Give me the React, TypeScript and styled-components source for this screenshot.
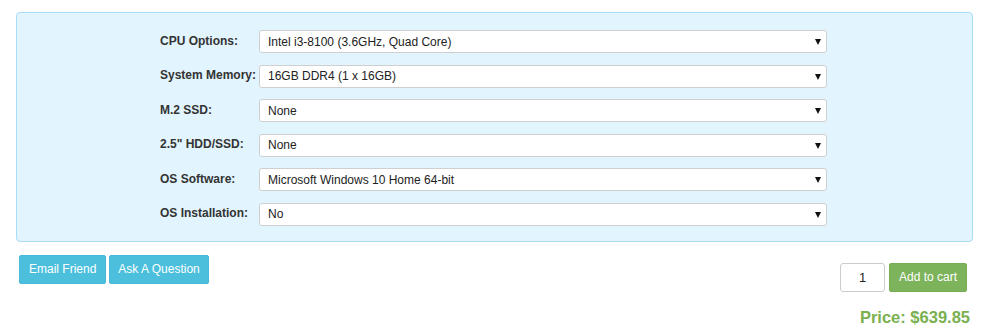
import React from "react";
import styled, { createGlobalStyle } from "styled-components";

const Global = createGlobalStyle`
  html, body { margin: 0; padding: 0; background: #fff; }
  body { font-family: "Liberation Sans", Arial, sans-serif; color: #333; }
  * { box-sizing: border-box; }
`;

const Page = styled.div`
  width: 1000px;
  padding: 12px 27px 0 16px;
`;

const Panel = styled.div`
  background: #e2f4fd;
  border: 1px solid #a9dcf6;
  border-radius: 4px;
  padding: 17px 0 15px;
  display: flex;
  justify-content: center;
`;

const Form = styled.div`
  width: 667px;
  margin-left: -2px;
  display: flex;
  flex-direction: column;
  gap: 11.6px;
`;

const Row = styled.div`
  display: grid;
  grid-template-columns: 99px 1fr;
  align-items: center;
`;

const Label = styled.label`
  font-size: 12px;
  font-weight: bold;
  color: #333;
  padding-bottom: 2px;
`;

const SelectWrap = styled.div`
  position: relative;
  &::after {
    content: "";
    position: absolute;
    right: 6px;
    top: 9px;
    border-left: 3.5px solid transparent;
    border-right: 3.5px solid transparent;
    border-top: 6px solid #111;
    pointer-events: none;
  }
`;

const Select = styled.select`
  appearance: none;
  -webkit-appearance: none;
  width: 100%;
  height: 23px;
  background: #fff;
  border: 1px solid #cfcfcf;
  border-radius: 3px;
  padding: 0 0 0 8px;
  font-family: "Liberation Sans", Arial, sans-serif;
  font-size: 12px;
  color: #222;
  outline: none;
`;

const Bottom = styled.div`
  display: flex;
  justify-content: space-between;
  align-items: flex-start;
  padding: 13px 0 0 3px;
`;

const Buttons = styled.div`
  display: flex;
  gap: 3px;
`;

const InfoButton = styled.button<{ $pad?: number }>`
  height: 29px;
  padding: 0 ${(p) => p.$pad ?? 9}px;
  background: #4bbfdc;
  border: 1px solid #46b8da;
  border-radius: 2px;
  color: #fff;
  font-family: "Liberation Sans", Arial, sans-serif;
  font-size: 12px;
`;

const Right = styled.div`
  display: flex;
  flex-direction: column;
  align-items: flex-end;
  padding-top: 8px;
  margin-right: 3px;
`;

const Cart = styled.div`
  display: flex;
  gap: 4px;
  margin-right: 3px;
`;

const Qty = styled.input`
  width: 45px;
  height: 29px;
  border: 1px solid #ccc;
  border-radius: 3px;
  text-align: center;
  font-family: "Liberation Sans", Arial, sans-serif;
  font-size: 13px;
  color: #222;
  outline: none;
`;

const CartButton = styled.button`
  width: 78px;
  height: 29px;
  background: #7cb35b;
  border: 1px solid #76ad55;
  border-radius: 2px;
  color: #fff;
  font-family: "Liberation Sans", Arial, sans-serif;
  font-size: 12px;
`;

const Price = styled.div`
  margin-top: 16px;
  font-size: 16.5px;
  font-weight: bold;
  color: #7ab050;
`;

const options: [string, string][] = [
  ["CPU Options:", "Intel i3-8100 (3.6GHz, Quad Core)"],
  ["System Memory:", "16GB DDR4 (1 x 16GB)"],
  ["M.2 SSD:", "None"],
  ['2.5" HDD/SSD:', "None"],
  ["OS Software:", "Microsoft Windows 10 Home 64-bit"],
  ["OS Installation:", "No"],
];

export default function App() {
  return (
    <>
      <Global />
      <Page>
        <Panel>
          <Form>
            {options.map(([label, value]) => (
              <Row key={label}>
                <Label>{label}</Label>
                <SelectWrap>
                  <Select defaultValue={value}>
                    <option>{value}</option>
                  </Select>
                </SelectWrap>
              </Row>
            ))}
          </Form>
        </Panel>
        <Bottom>
          <Buttons>
            <InfoButton $pad={9}>Email Friend</InfoButton>
            <InfoButton $pad={8}>Ask A Question</InfoButton>
          </Buttons>
          <Right>
            <Cart>
              <Qty defaultValue="1" />
              <CartButton>Add to cart</CartButton>
            </Cart>
            <Price>Price: $639.85</Price>
          </Right>
        </Bottom>
      </Page>
    </>
  );
}
